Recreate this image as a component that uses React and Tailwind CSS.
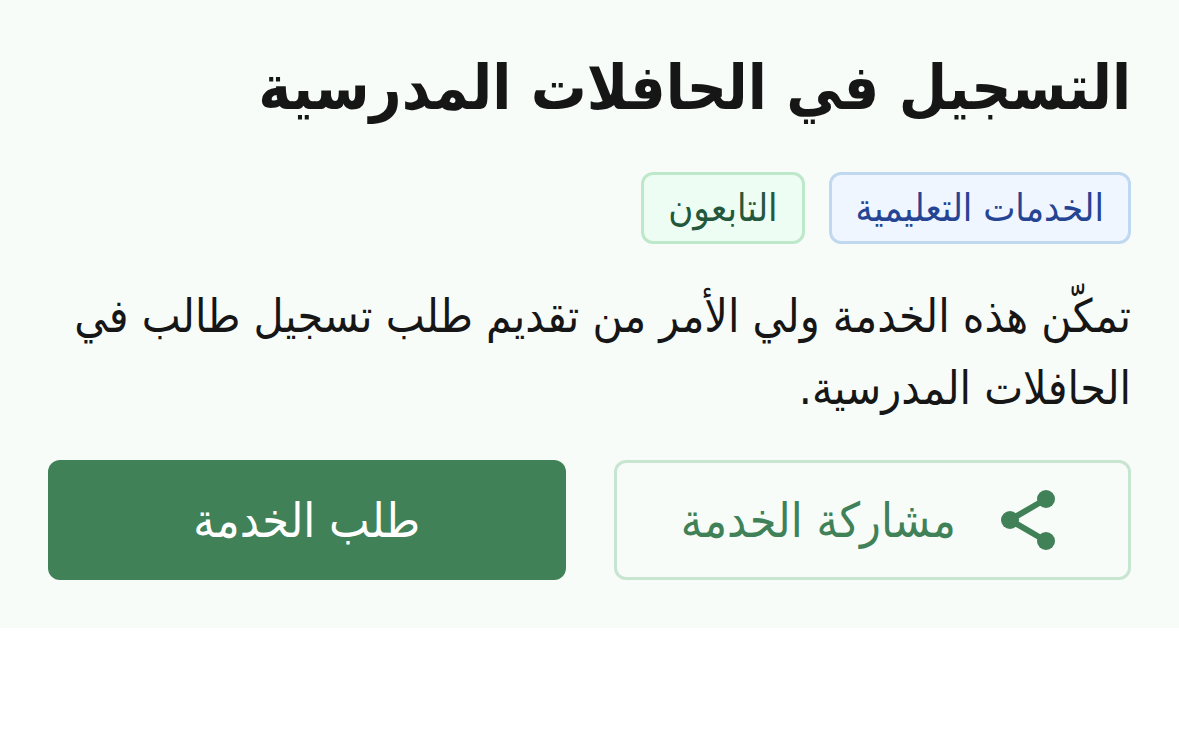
import React from 'react';

const tags = [
  { label: 'الخدمات التعليمية', className: 'bg-[#eff6ff] border-[#c0d8f0] text-[#254493]' },
  { label: 'التابعون', className: 'bg-[#eefdf3] border-[#bde8c9] text-[#24583c]' },
];

function ShareIcon() {
  return (
    <svg viewBox="0 0 72 72" className="w-[72px] h-[72px] shrink-0" aria-hidden="true">
      <path d="M54 15 L18 36 L54 57" fill="none" stroke="currentColor" strokeWidth="6" />
      <circle cx="54" cy="15" r="9" fill="currentColor" />
      <circle cx="18" cy="36" r="9" fill="currentColor" />
      <circle cx="54" cy="57" r="9" fill="currentColor" />
    </svg>
  );
}

export default function App() {
  return (
    <div dir="rtl" lang="ar" className="font-['DejaVu_Sans_Condensed','DejaVu_Sans',sans-serif] bg-white text-[#161616]">
      <header className="bg-[#f7fcf9] p-12">
        <h1 className="text-[62px] leading-[80px] font-bold">التسجيل في الحافلات المدرسية</h1>
        <ul className="flex flex-wrap gap-6 mt-11">
          {tags.map((tag) => (
            <li
              key={tag.label}
              className={`flex items-center h-[72px] px-6 rounded-xl border-3 text-[38px] leading-[48px] ${tag.className}`}
            >
              {tag.label}
            </li>
          ))}
        </ul>
        <p className="mt-9 text-[46px] leading-[72px]">
          تمكّن هذه الخدمة ولي الأمر من تقديم طلب تسجيل طالب في الحافلات المدرسية.
        </p>
        <div className="grid grid-cols-2 gap-12 mt-9">
          <button
            type="button"
            className="flex items-center justify-center gap-9 h-[120px] rounded-xl border-3 border-[#c8e5d1] text-[#408158] text-[48px]"
          >
            <ShareIcon />
            مشاركة الخدمة
          </button>
          <button type="button" className="h-[120px] rounded-xl bg-[#408158] text-white text-[48px]">
            طلب الخدمة
          </button>
        </div>
      </header>
    </div>
  );
}
